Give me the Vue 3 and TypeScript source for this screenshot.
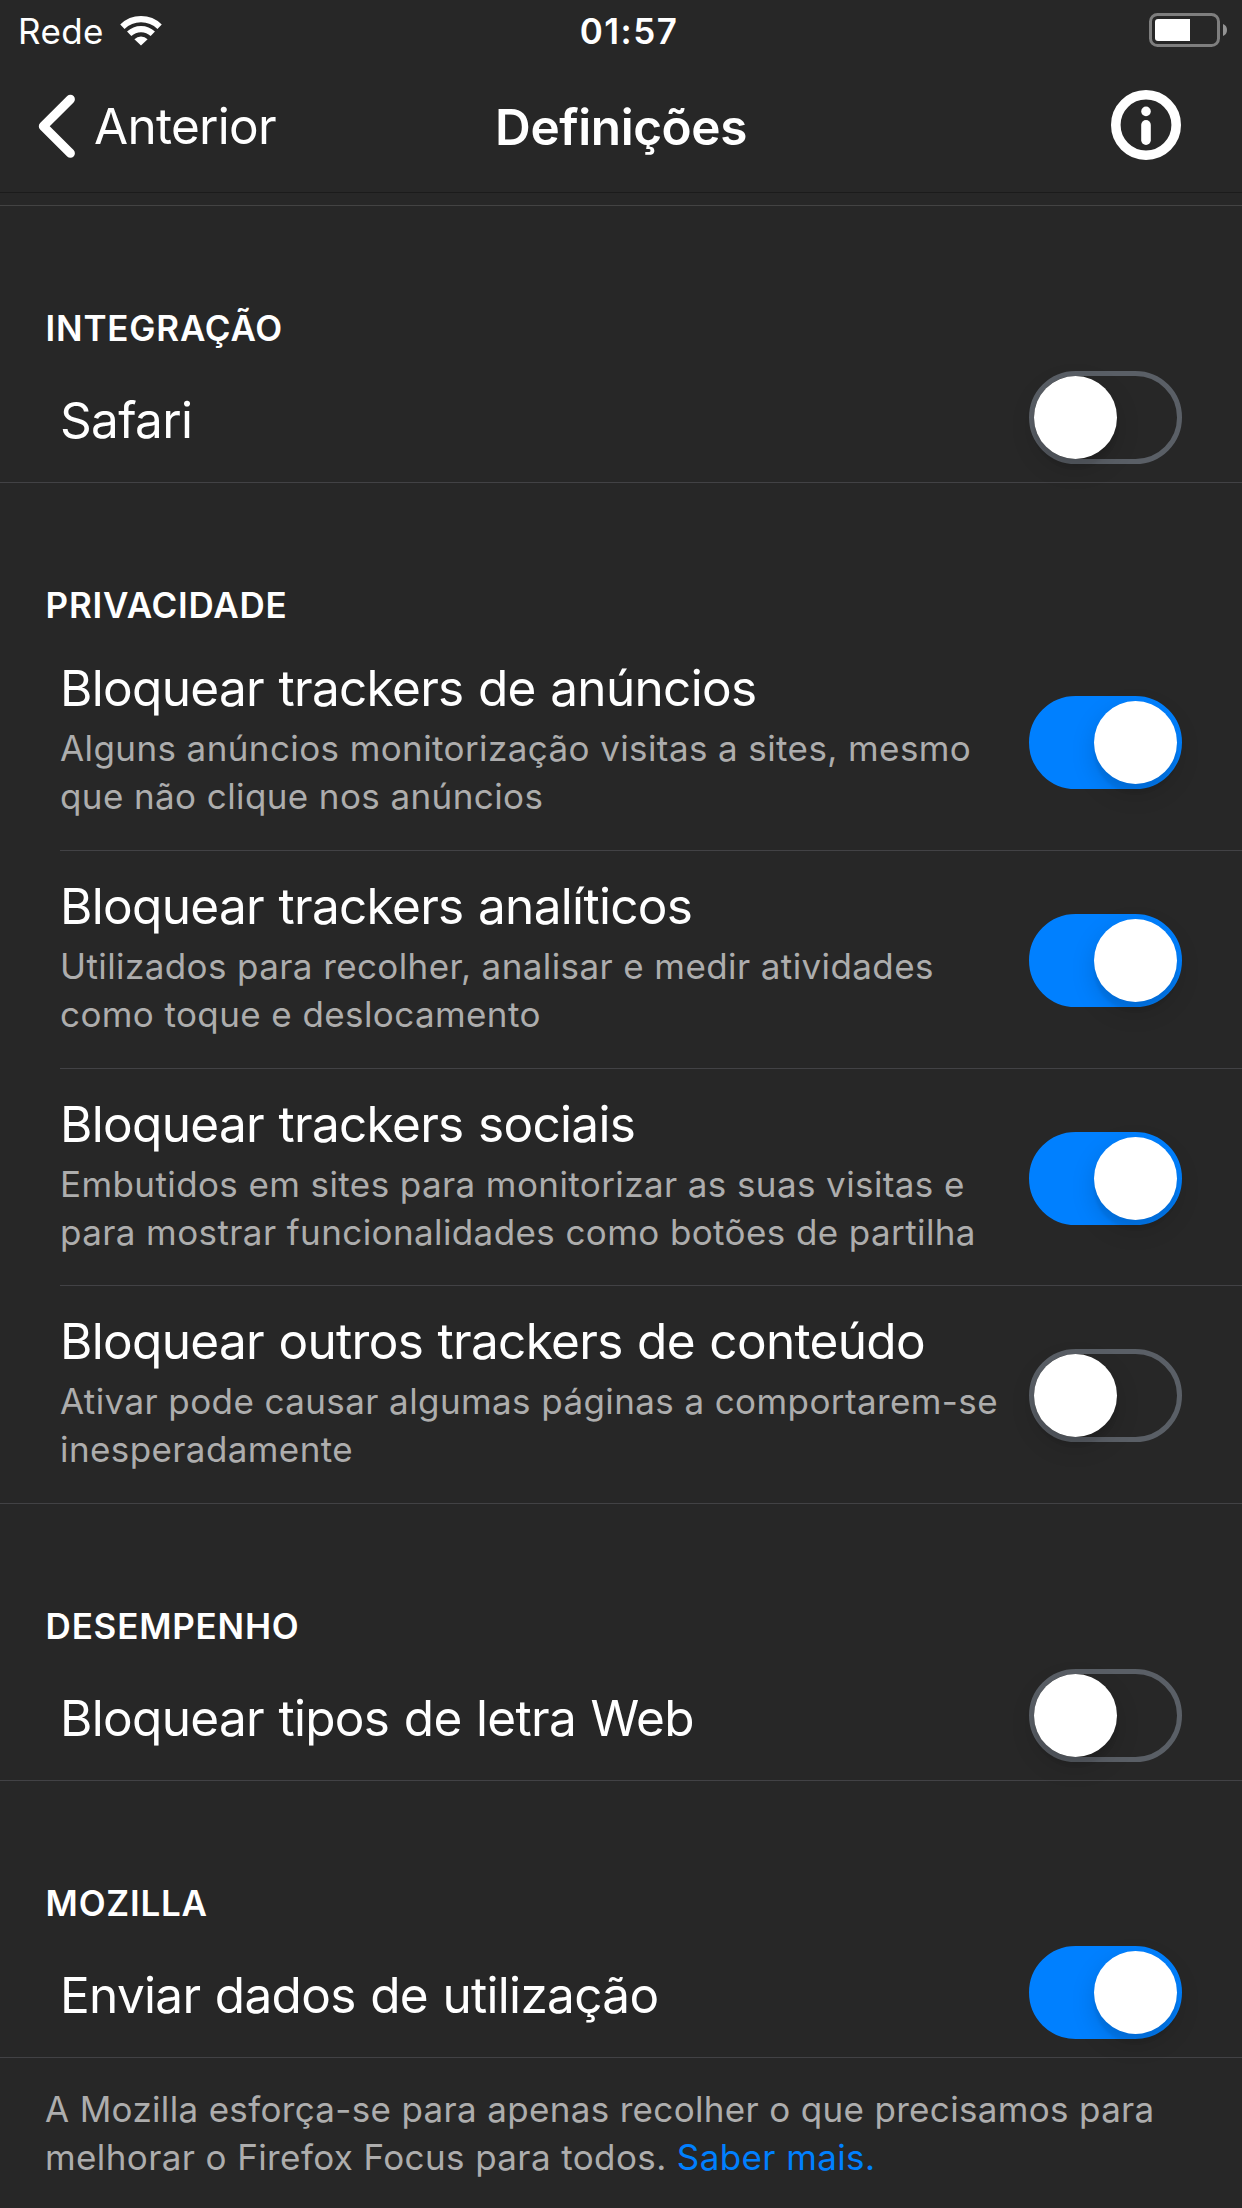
<script setup lang="ts">
import { ref } from 'vue'

interface Setting {
  title: string
  lines?: string[]
  on: boolean
}

interface Section {
  heading: string
  settings: Setting[]
}

const sections = ref<Section[]>([
  {
    heading: 'INTEGRAÇÃO',
    settings: [{ title: 'Safari', on: false }],
  },
  {
    heading: 'PRIVACIDADE',
    settings: [
      {
        title: 'Bloquear trackers de anúncios',
        lines: ['Alguns anúncios monitorização visitas a sites, mesmo', 'que não clique nos anúncios'],
        on: true,
      },
      {
        title: 'Bloquear trackers analíticos',
        lines: ['Utilizados para recolher, analisar e medir atividades', 'como toque e deslocamento'],
        on: true,
      },
      {
        title: 'Bloquear trackers sociais',
        lines: ['Embutidos em sites para monitorizar as suas visitas e', 'para mostrar funcionalidades como botões de partilha'],
        on: true,
      },
      {
        title: 'Bloquear outros trackers de conteúdo',
        lines: ['Ativar pode causar algumas páginas a comportarem-se', 'inesperadamente'],
        on: false,
      },
    ],
  },
  {
    heading: 'DESEMPENHO',
    settings: [{ title: 'Bloquear tipos de letra Web', on: false }],
  },
  {
    heading: 'MOZILLA',
    settings: [{ title: 'Enviar dados de utilização', on: true }],
  },
])
</script>

<template>
  <div class="screen">
    <header class="top">
      <div class="status">
        <div class="carrier">
          <span>Rede</span>
          <svg class="wifi" width="44" height="32" viewBox="0 0 44 32">
            <path d="M3.4 12.7a26.8 26.8 0 0 1 37.2 0" />
            <path d="M10.2 19.8a17 17 0 0 1 23.6 0" />
            <path class="dot" d="M22 31.5l-6.6-6.3a9.3 9.3 0 0 1 13.2 0z" />
          </svg>
        </div>
        <span class="time">01:57</span>
        <svg class="battery" width="80" height="34" viewBox="0 0 80 34">
          <rect x="1.5" y="1.5" width="68" height="31" rx="7" fill="none" stroke="#7e7e7e" stroke-width="3" />
          <path d="M9 6h32v22H9a3 3 0 0 1-3-3V9a3 3 0 0 1 3-3z" fill="#fff" />
          <path d="M74 11a6.5 6.5 0 0 1 0 12z" fill="#939393" />
        </svg>
      </div>
      <nav class="nav">
        <button class="back" type="button">
          <svg width="40" height="66" viewBox="0 0 40 66">
            <path d="M34.4 6.2L7.3 33.2l27.1 27" />
          </svg>
          <span>Anterior</span>
        </button>
        <h1>Definições</h1>
        <button class="info" type="button" aria-label="Info">
          <svg width="70" height="70" viewBox="0 0 70 70">
            <circle cx="35" cy="35" r="30.2" fill="none" stroke="#fff" stroke-width="9.6" />
            <circle cx="35" cy="21.4" r="4.8" fill="#fff" />
            <rect x="30.2" y="30" width="9.6" height="25" rx="4.8" fill="#fff" />
          </svg>
        </button>
      </nav>
    </header>

    <main class="list">
      <section v-for="section in sections" :key="section.heading">
        <h2>{{ section.heading }}</h2>
        <div
          v-for="setting in section.settings"
          :key="setting.title"
          class="row"
          :class="{ detailed: setting.lines }"
        >
          <div class="text">
            <h3>{{ setting.title }}</h3>
            <p v-for="line in setting.lines" :key="line">{{ line }}</p>
          </div>
          <button
            class="switch"
            :class="{ on: setting.on }"
            type="button"
            role="switch"
            :aria-checked="setting.on"
            @click="setting.on = !setting.on"
          >
            <span class="knob"></span>
          </button>
        </div>
      </section>
    </main>

    <footer>
      <p>A Mozilla esforça-se para apenas recolher o que precisamos para</p>
      <p>melhorar o Firefox Focus para todos. <a>Saber mais.</a></p>
    </footer>
  </div>
</template>

<style>
body {
  background: #272727;
}
</style>

<style scoped>
.screen {
  width: 1242px;
  height: 2208px;
  overflow: hidden;
  background: #272727;
  color: #fff;
  font-family: Inter, "Liberation Sans", sans-serif;
}
h1, h2, h3, p {
  margin: 0;
  white-space: nowrap;
}
button {
  padding: 0;
  border: 0;
  background: none;
  color: inherit;
  font: inherit;
}
.top {
  height: 192px;
  border-bottom: 1px solid #1b1b1b;
}
.status {
  display: grid;
  grid-template-columns: 1fr auto 1fr;
  height: 60px;
  padding: 0 13px 0 18px;
  font-size: 35px;
  line-height: 48px;
}
.status > * {
  margin-top: 7px;
}
.carrier {
  display: flex;
  letter-spacing: 0.38px;
}
.wifi {
  margin: 6.5px 0 0 15px;
  fill: none;
  stroke: #fff;
  stroke-width: 6.2;
}
.wifi .dot {
  fill: #fff;
  stroke: none;
}
.time {
  padding-left: 11px;
  font-weight: 600;
  letter-spacing: 1.48px;
}
.status .battery {
  justify-self: end;
  margin-top: 13px;
}
.nav {
  display: grid;
  grid-template-columns: 1fr auto 1fr;
  align-items: start;
  height: 132px;
  padding: 0 61px 0 36px;
  font-size: 49.5px;
  line-height: 60px;
}
.back {
  display: flex;
  margin-top: 33px;
  letter-spacing: -0.72px;
}
.back svg {
  flex: none;
  fill: none;
  stroke: #fff;
  stroke-width: 9;
  stroke-linecap: round;
  stroke-linejoin: round;
}
.back span {
  margin: 3px 0 0 18px;
}
.nav h1 {
  margin: 37px -25px 0 0;
  font-size: inherit;
  font-weight: 600;
  letter-spacing: -0.44px;
}
.info {
  justify-self: end;
  margin-top: 30px;
  height: 70px;
}
.info svg {
  display: block;
}
.list {
  margin-top: 12px;
  border-top: 1px solid #434343;
}
h2 {
  box-sizing: border-box;
  height: 150px;
  padding: 98px 0 0 45.6px;
  font-size: 35px;
  line-height: 48px;
  font-weight: 600;
  letter-spacing: 0.78px;
}
.row {
  display: flex;
  justify-content: space-between;
  align-items: flex-start;
  box-sizing: border-box;
  height: 127px;
  padding: 0 60px;
  border-bottom: 1px solid #424245;
}
.row.detailed {
  height: 218px;
}
.row.detailed:nth-of-type(3) {
  height: 217px;
}
.row.detailed:not(:last-child) {
  margin-left: 60px;
  padding-left: 0;
}
.text {
  padding-top: 34px;
}
.detailed .text {
  padding-top: 25px;
}
h3 {
  margin-bottom: 6px;
  font-size: 49.5px;
  line-height: 60px;
  font-weight: 400;
  letter-spacing: -0.68px;
  word-spacing: 1.2px;
}
p {
  font-size: 35px;
  line-height: 48px;
  letter-spacing: 0.4px;
  color: #adadad;
}
.switch {
  flex: none;
  display: flex;
  box-sizing: border-box;
  width: 153px;
  height: 93px;
  margin-top: 15px;
  padding: 0;
  border: 5px solid #5a5f66;
  border-radius: 47px;
}
.detailed .switch {
  margin-top: 63px;
}
.switch.on {
  justify-content: flex-end;
  border-color: #0080ff;
  background: #0080ff;
}
.knob {
  width: 83px;
  height: 83px;
  border-radius: 50%;
  background: #fff;
  box-shadow: 0 9px 24px rgba(0, 0, 0, 0.15), 0 9px 3px rgba(0, 0, 0, 0.06);
}
.switch:not(.on) .knob {
  margin-left: -0.5px;
}
footer {
  padding: 27px 0 0 45px;
}
footer p {
  letter-spacing: 0.33px;
}
footer p:last-child {
  letter-spacing: 0.39px;
}
footer a {
  color: #0080ff;
}
</style>
